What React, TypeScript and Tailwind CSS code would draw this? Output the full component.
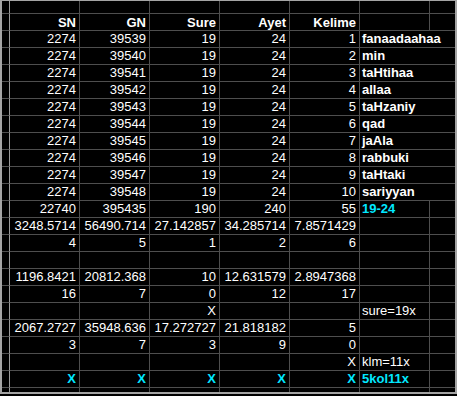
import React from "react";

type Cell = { t?: string; bold?: boolean; cyan?: boolean; left?: boolean; span?: boolean };

const words = [
  "fanaadaahaa",
  "min",
  "taHtihaa",
  "allaa",
  "taHzaniy",
  "qad",
  "jaAla",
  "rabbuki",
  "taHtaki",
  "sariyyan",
];

const n = (t: string): Cell => ({ t });
const cx: Cell = { t: "X", bold: true, cyan: true };

// each row: SN, GN, Sure, Ayet, Kelime, word column, extra column
const rows: Cell[][] = [
  ...words.map((w, i) => [
    n("2274"),
    n(String(39539 + i)),
    n("19"),
    n("24"),
    n(String(i + 1)),
    { t: w, bold: true, left: true, span: true },
  ]),
  [n("22740"), n("395435"), n("190"), n("240"), n("55"), { t: "19-24", bold: true, cyan: true, left: true }, {}],
  [n("3248.5714"), n("56490.714"), n("27.142857"), n("34.285714"), n("7.8571429"), {}, {}],
  [n("4"), n("5"), n("1"), n("2"), n("6"), {}, {}],
  [{}, {}, {}, {}, {}, {}, {}],
  [n("1196.8421"), n("20812.368"), n("10"), n("12.631579"), n("2.8947368"), {}, {}],
  [n("16"), n("7"), n("0"), n("12"), n("17"), {}, {}],
  [{}, {}, n("X"), {}, {}, { t: "sure=19x", left: true }, {}],
  [n("2067.2727"), n("35948.636"), n("17.272727"), n("21.818182"), n("5"), {}, {}],
  [n("3"), n("7"), n("3"), n("9"), n("0"), {}, {}],
  [{}, {}, {}, {}, n("X"), { t: "klm=11x", left: true }, {}],
  [cx, cx, cx, cx, cx, { t: "5kol11x", bold: true, cyan: true, left: true }, {}],
];

const headers = ["SN", "GN", "Sure", "Ayet", "Kelime"];

const GridCell = ({ c, h, header }: { c: Cell; h: string; header?: boolean }) => (
  <div
    className={`${h} ${c.span ? "col-span-2" : ""} border-r border-b border-[#4e4e4e] overflow-visible whitespace-nowrap flex ${
      c.left ? "justify-start pl-[2px]" : "justify-end pr-[3px]"
    } ${header ? "pt-[1px]" : ""} ${c.bold ? "font-bold" : ""} ${c.cyan ? "text-[#00e8ff]" : "text-white"}`}
  >
    {c.t}
  </div>
);

export default function App() {
  return (
    <div className="w-[457px] h-[396px] bg-black overflow-hidden">
      <div
        className="w-[457px] h-[394px] border-l-2 border-r-2 border-t border-b-2 border-[#a4a4a4] overflow-hidden grid grid-cols-[8px_repeat(6,70px)_27px] leading-[15px] text-[13px]"
        style={{ fontFamily: '"Liberation Sans", Arial, sans-serif' }}
      >
        {/* partial top row */}
        <div className="h-[13px] border-r border-b border-r-[#9a9a9a] border-b-[#4e4e4e]" />
        {Array.from({ length: 7 }).map((_, i) => (
          <div key={i} className="h-[13px] border-r border-b border-[#4e4e4e]" />
        ))}

        {/* header */}
        <div className="h-[17px] border-r border-b border-r-[#9a9a9a] border-b-[#4e4e4e]" />
        {headers.map((t) => (
          <GridCell key={t} c={{ t, bold: true }} h="h-[17px]" header />
        ))}
        <GridCell c={{}} h="h-[17px]" />
        <GridCell c={{}} h="h-[17px]" />

        {rows.map((r, ri) => (
          <React.Fragment key={ri}>
            <div className="h-[17px] border-r border-b border-r-[#9a9a9a] border-b-[#4e4e4e]" />
            {r.map((c, ci) => (
              <GridCell key={ci} c={c} h="h-[17px]" />
            ))}
          </React.Fragment>
        ))}

        {/* partial bottom row */}
        <div className="h-[5px] border-r border-r-[#9a9a9a]" />
        {Array.from({ length: 7 }).map((_, i) => (
          <div key={i} className="h-[5px] border-r border-[#4e4e4e]" />
        ))}
      </div>
    </div>
  );
}
